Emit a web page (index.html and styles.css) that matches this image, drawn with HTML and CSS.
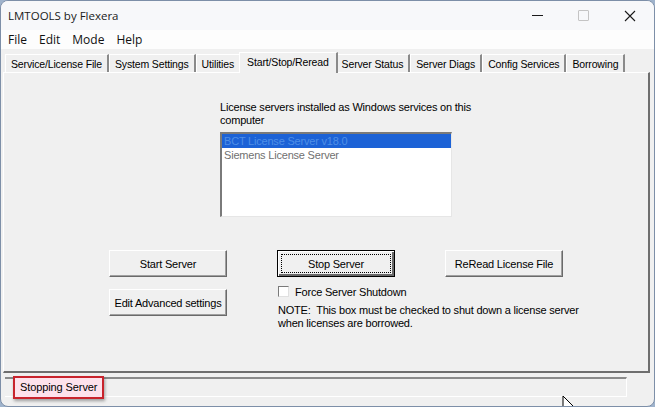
FILE: index.html
```html
<!DOCTYPE html>
<html lang="en">

<head>
    <meta charset="UTF-8">
    <title>LMTOOLS by Flexera</title>
    <link rel="stylesheet" href="styles.css">
</head>

<body>
    <div class="window">
        <div class="titlebar">
            <span class="title">LMTOOLS by Flexera</span>
            <div class="controls">
                <span class="ctl ctl-min"></span>
                <span class="ctl ctl-max"></span>
                <span class="ctl ctl-close">
                    <svg width="12" height="12" viewBox="0 0 12 12"><path d="M1 1 L11 11 M11 1 L1 11" stroke="#1a1a1a" stroke-width="1.1" /></svg>
                </span>
            </div>
        </div>

        <div class="menubar">
            <span>File</span>
            <span>Edit</span>
            <span>Mode</span>
            <span>Help</span>
        </div>

        <div class="tabs">
            <div class="tab">Service/License File</div>
            <div class="tab">System Settings</div>
            <div class="tab">Utilities</div>
            <div class="tab active">Start/Stop/Reread</div>
            <div class="tab">Server Status</div>
            <div class="tab">Server Diags</div>
            <div class="tab">Config Services</div>
            <div class="tab">Borrowing</div>
        </div>

        <div class="panel">
            <div class="services">
                <div class="services-label">License servers installed as Windows services on this computer</div>
                <div class="listbox">
                    <div class="item selected">BCT License Server v18.0</div>
                    <div class="item">Siemens License Server</div>
                </div>
            </div>

            <div class="actions">
                <button class="btn">Start Server</button>
                <button class="btn focused"><span>Stop Server</span></button>
                <button class="btn">ReRead License File</button>
                <button class="btn btn-edit">Edit Advanced settings</button>
                <div class="shutdown">
                    <label class="check"><span class="box"></span>Force Server Shutdown</label>
                    <div class="note">NOTE:&nbsp; This box must be checked to shut down a license server<br>when licenses are borrowed.</div>
                </div>
            </div>
        </div>

        <div class="statusbar">
            <div class="status-field">
                <span class="status-text">Stopping Server</span>
            </div>
        </div>

        <svg class="cursor" width="14" height="20" viewBox="0 0 14 20">
            <path d="M1 1 L1 17 L5 13 L8 19 L10 18 L7 12 L12 12 Z" fill="#ffffff" stroke="#000000" stroke-width="1" />
        </svg>
    </div>
</body>

</html>
```

FILE: styles.css
```css
body {
    margin: 0;
    background-color: #9fb3cc;
    font-family: "Liberation Sans", Arial, sans-serif;
}

.window {
    position: relative;
    width: 655px;
    height: 407px;
    box-sizing: border-box;
    border: 1px solid #7d8fa8;
    border-radius: 8px;
    background-color: #f0f0f0;
    overflow: hidden;
    display: flex;
    flex-direction: column;
}

.titlebar {
    height: 29px;
    background-color: #f7f8fa;
    display: flex;
    align-items: center;
    justify-content: space-between;
    padding-left: 7px;
}

.title {
    font-family: "Open Sans", "Noto Sans", sans-serif;
    font-size: 11.5px;
    color: #1a1a1a;
}

.controls {
    display: flex;
    height: 100%;
}

.ctl {
    width: 46px;
    height: 100%;
    display: flex;
    align-items: center;
    justify-content: center;
}

.ctl-min::before {
    content: "";
    width: 11px;
    height: 1px;
    background-color: #1a1a1a;
}

.ctl-max::before {
    content: "";
    width: 9px;
    height: 9px;
    border: 1px solid #c4c4c4;
    border-radius: 1px;
}

.ctl-close {
    width: 48px;
}

.menubar {
    height: 19px;
    background-color: #fdfdfd;
    display: flex;
    align-items: center;
    gap: 12px;
    padding-left: 7px;
    font-family: "Open Sans", "Noto Sans", sans-serif;
    font-size: 12px;
    color: #111111;
}

.tabs {
    display: flex;
    align-items: flex-end;
    height: 22px;
    padding-left: 4px;
    margin-top: 1px;
    font-size: 10.5px;
    letter-spacing: -0.15px;
    color: #000000;
}

.tab {
    height: 18px;
    line-height: 18px;
    padding: 0 5px;
    border-left: 1px solid #ffffff;
    border-top: 1px solid #ffffff;
    border-right: 2px solid #8a8a8a;
    box-sizing: border-box;
    white-space: nowrap;
}

.tab.active {
    height: 21px;
    line-height: 18px;
    margin: 0 -2px -1px;
    padding: 0 7px;
    position: relative;
    z-index: 1;
    background-color: #f0f0f0;
}

.panel {
    height: 301px;
    margin: 0 4px 0 2px;
    box-sizing: border-box;
    border-top: 1px solid #ffffff;
    border-left: 1px solid #ffffff;
    border-right: 2px solid #6e6e6e;
    border-bottom: 2px solid #6e6e6e;
    font-size: 11px;
    letter-spacing: -0.2px;
    color: #000000;
}

.services {
    margin: 28px 0 0 216px;
}

.services-label {
    width: 255px;
    line-height: 13px;
}

.listbox {
    width: 232px;
    margin-top: 5px;
    height: 85px;
    box-sizing: border-box;
    background-color: #ffffff;
    border-top: 2px solid #7a7a7a;
    border-left: 2px solid #7a7a7a;
    border-right: 1px solid #e6e6e6;
    border-bottom: 1px solid #e6e6e6;
}

.item {
    height: 14px;
    line-height: 14px;
    padding-left: 2px;
    color: #707070;
}

.item.selected {
    background-color: #1c62d6;
    color: #4f8fe6;
}

.actions {
    display: grid;
    grid-template-columns: 118px 118px 118px;
    grid-template-rows: 27px auto;
    column-gap: 50px;
    row-gap: 8px;
    margin: 33px 0 0 105px;
}

.btn {
    height: 27px;
    background-color: #f0f0f0;
    border: 1px solid;
    border-color: #ffffff #6a6a6a #6a6a6a #ffffff;
    box-shadow: inset -1px -1px #a0a0a0;
    font-family: "Liberation Sans", Arial, sans-serif;
    font-size: 11px;
    letter-spacing: -0.2px;
    color: #000000;
    padding: 0;
}

.btn.focused {
    border-color: #000000;
    box-shadow: inset 1px 1px #ffffff, inset -2px -2px #6a6a6a;
    padding: 3px;
}

.btn.focused span {
    display: flex;
    align-items: center;
    justify-content: center;
    height: 100%;
    border: 1px dotted #000000;
    box-sizing: border-box;
}

.btn-edit {
    margin-top: 4px;
}

.shutdown {
    grid-column: 2 / 4;
    padding-left: 1px;
}

.check {
    display: flex;
    align-items: center;
    height: 13px;
}

.box {
    width: 11px;
    height: 11px;
    box-sizing: border-box;
    margin-right: 6px;
    background-color: #ffffff;
    border-top: 1px solid #7a7a7a;
    border-left: 1px solid #7a7a7a;
    border-right: 1px solid #e0e0e0;
    border-bottom: 1px solid #e0e0e0;
}

.note {
    margin-top: 6px;
    line-height: 13px;
    white-space: nowrap;
}

.statusbar {
    flex: 1;
    padding: 4px 0 0 4px;
}

.status-field {
    width: 622px;
    height: 20px;
    box-sizing: border-box;
    border-top: 2px solid #8a8a8a;
    border-right: 1px solid #ffffff;
    border-bottom: 1px solid #ffffff;
    display: flex;
    align-items: center;
    padding-left: 8px;
}

.status-text {
    font-size: 11px;
    letter-spacing: -0.1px;
    padding: 3px 5px 4px 5px;
    background-color: #fde2ec;
    border: 2px solid #c8232c;
    box-shadow: 1px 2px 3px rgba(0, 0, 0, 0.35);
}

.cursor {
    position: absolute;
    left: 561px;
    top: 394px;
}
```
